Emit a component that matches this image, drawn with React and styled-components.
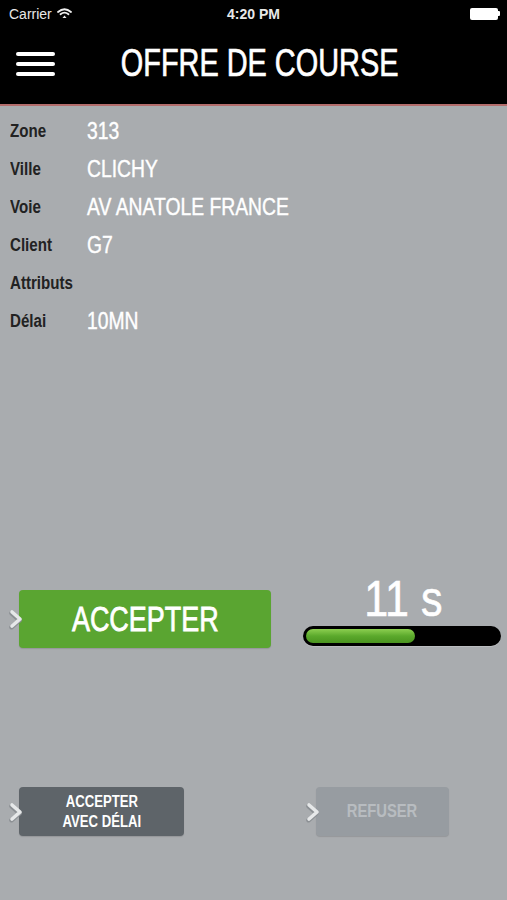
import React from 'react'
import styled, { createGlobalStyle } from 'styled-components'

const GlobalStyle = createGlobalStyle`
  html, body {
    margin: 0;
    padding: 0;
    background: #a9acaf;
  }
  * { box-sizing: border-box; }
`

const sans = `"Liberation Sans", Arial, sans-serif`

const Page = styled.div`
  width: 507px;
  height: 900px;
  display: flex;
  flex-direction: column;
  background: #a9acaf;
  overflow: hidden;
  font-family: ${sans};
`

// narrow glyphs: the app uses a condensed Helvetica
const Squeeze = styled.span`
  display: inline-block;
  white-space: nowrap;
  transform: scaleX(${p => p.$k});
  transform-origin: ${p => p.$origin || 'center'};
  -webkit-text-stroke: ${p => p.$stroke || 0}px currentColor;
`

const TopBlock = styled.div`
  background: #000;
  border-bottom: 2px solid #b36d6c;
`

const StatusBar = styled.div`
  height: 27px;
  display: flex;
  align-items: center;
  justify-content: space-between;
  padding: 0 7px 0 9px;
  color: #fff;
  font-size: 14px;
  position: relative;
`

const Carrier = styled.div`
  display: flex;
  align-items: center;
  gap: 5px;
  color: #e8e8e8;
`

const Clock = styled.div`
  position: absolute;
  left: 0;
  right: 0;
  text-align: center;
  font-weight: bold;
  font-size: 14px;
  color: #e8e8e8;
`

const Battery = styled.div`
  display: flex;
  align-items: center;
`

const BatteryBody = styled.div`
  width: 28px;
  height: 12px;
  background: #fff;
  border-radius: 2px;
`

const BatteryNub = styled.div`
  width: 2px;
  height: 5px;
  background: #fff;
  border-radius: 0 1px 1px 0;
`

const NavBar = styled.div`
  height: 77px;
  display: flex;
  align-items: center;
  padding-left: 16px;
  padding-right: 42px;
`

const Hamburger = styled.div`
  width: 39px;
  display: flex;
  flex-direction: column;
  gap: 6px;
  margin-top: -4px;
`

const Bar = styled.div`
  height: 4px;
  background: #fff;
  border-radius: 2px;
`

const Title = styled.div`
  flex: 1;
  text-align: center;
  color: #fff;
  font-size: 38px;
  margin-top: -4px;
`

const InfoList = styled.div`
  padding: 6px 0 0 10px;
  display: flex;
  flex-direction: column;
`

const InfoRow = styled.div`
  height: 38px;
  display: flex;
  align-items: center;
`

const Label = styled.div`
  width: 77px;
  color: #222;
  font-size: 18px;
  font-weight: bold;
`

const Value = styled.div`
  color: #fff;
  font-size: 23px;
`

const ActionRow = styled.div`
  margin-top: 235px;
  display: flex;
  align-items: flex-start;
  justify-content: space-between;
  padding-right: 6px;
`

const ButtonWrap = styled.div`
  position: relative;
  padding-left: ${p => p.$offset}px;
  margin-top: ${p => p.$top || 0}px;
`

const Chevron = styled.svg`
  position: absolute;
  left: ${p => p.$left}px;
  top: 50%;
  transform: translateY(-50%);
`

const ActionButton = styled.div`
  width: ${p => p.$w}px;
  height: ${p => p.$h}px;
  background: ${p => p.$bg};
  color: ${p => p.$color};
  border-radius: 4px;
  display: flex;
  align-items: center;
  justify-content: center;
  text-align: center;
  font-size: ${p => p.$size}px;
  font-weight: ${p => p.$weight || 'normal'};
  line-height: ${p => p.$lh || 1.1};
  box-shadow: 0 1px 1px rgba(0, 0, 0, 0.12);
`

const TimerBox = styled.div`
  width: 198px;
  display: flex;
  flex-direction: column;
  align-items: center;
`

const TimerText = styled.div`
  color: #fff;
  font-size: 50px;
  line-height: 48px;
  margin-bottom: 3px;
  margin-left: 2px;
`

const Track = styled.div`
  width: 198px;
  height: 20px;
  background: #000;
  border-radius: 10px;
  padding: 3px;
  box-shadow: 0 1px 0 rgba(255, 255, 255, 0.2);
`

const Fill = styled.div`
  height: 100%;
  border-radius: 7px;
  background: linear-gradient(#8ccf50, #5ba92c 50%, #4a941f);
`

const BottomRow = styled.div`
  margin-top: 139px;
  display: flex;
  align-items: flex-start;
`

const ChevronIcon = ({ left }) => (
  <Chevron $left={left} width="15" height="22" viewBox="0 0 15 22">
    <polyline points="3,4 11,11 3,18" fill="none" stroke="#8c9094" strokeWidth="4.5" strokeLinecap="round" strokeLinejoin="round" transform="translate(-0.5,1.2)" />
    <polyline points="3,4 11,11 3,18" fill="none" stroke="#e6e8e9" strokeWidth="3.6" strokeLinecap="round" strokeLinejoin="round" />
  </Chevron>
)

const infos = [
  ['Zone', '313'],
  ['Ville', 'CLICHY'],
  ['Voie', 'AV ANATOLE FRANCE'],
  ['Client', 'G7'],
  ['Attributs', ''],
  ['Délai', '10MN'],
]

export default function App() {
  const progress = 57

  return (
    <Page>
      <GlobalStyle />
      <TopBlock>
        <StatusBar>
          <Carrier>
            Carrier
            <svg width="15" height="11" viewBox="0 0 15 11">
              <path d="M1 4 Q7.5 -1.5 14 4" fill="none" stroke="#eee" strokeWidth="1.8" strokeLinecap="round" />
              <path d="M3.5 6.3 Q7.5 3 11.5 6.3" fill="none" stroke="#eee" strokeWidth="1.8" strokeLinecap="round" />
              <path d="M5.5 10 L7.5 7.6 L9.5 10 Z" fill="#eee" />
            </svg>
          </Carrier>
          <Clock>4:20 PM</Clock>
          <Battery>
            <BatteryBody />
            <BatteryNub />
          </Battery>
        </StatusBar>
        <NavBar>
          <Hamburger>
            <Bar />
            <Bar />
            <Bar />
          </Hamburger>
          <Title><Squeeze $k={0.76} $stroke={0.7}>OFFRE DE COURSE</Squeeze></Title>
        </NavBar>
      </TopBlock>

      <InfoList>
        {infos.map(([label, value]) => (
          <InfoRow key={label}>
            <Label><Squeeze $k={0.84} $origin="left">{label}</Squeeze></Label>
            <Value><Squeeze $k={0.84} $origin="left" $stroke={0.4}>{value}</Squeeze></Value>
          </InfoRow>
        ))}
      </InfoList>

      <ActionRow>
        <ButtonWrap $offset={19} $top={15}>
          <ActionButton $w={252} $h={58} $bg="#5aa531" $color="#fff" $size={35}>
            <Squeeze $k={0.77} $stroke={0.8}>ACCEPTER</Squeeze>
          </ActionButton>
          <ChevronIcon left={9} />
        </ButtonWrap>
        <TimerBox>
          <TimerText><Squeeze $k={0.86} $stroke={0.6}>11 s</Squeeze></TimerText>
          <Track>
            <Fill style={{ width: `${progress}%` }} />
          </Track>
        </TimerBox>
      </ActionRow>

      <BottomRow>
        <ButtonWrap $offset={19}>
          <ActionButton $w={165} $h={49} $bg="#5e6469" $color="#fff" $size={16} $weight="bold" $lh={1.2}>
            <Squeeze $k={0.82}>ACCEPTER<br />AVEC DÉLAI</Squeeze>
          </ActionButton>
          <ChevronIcon left={9} />
        </ButtonWrap>
        <ButtonWrap $offset={132}>
          <ActionButton $w={133} $h={49} $bg="#979ca1" $color="#b8bcc0" $size={18} $weight="bold">
            <Squeeze $k={0.82}>REFUSER</Squeeze>
          </ActionButton>
          <ChevronIcon left={122} />
        </ButtonWrap>
      </BottomRow>
    </Page>
  )
}
